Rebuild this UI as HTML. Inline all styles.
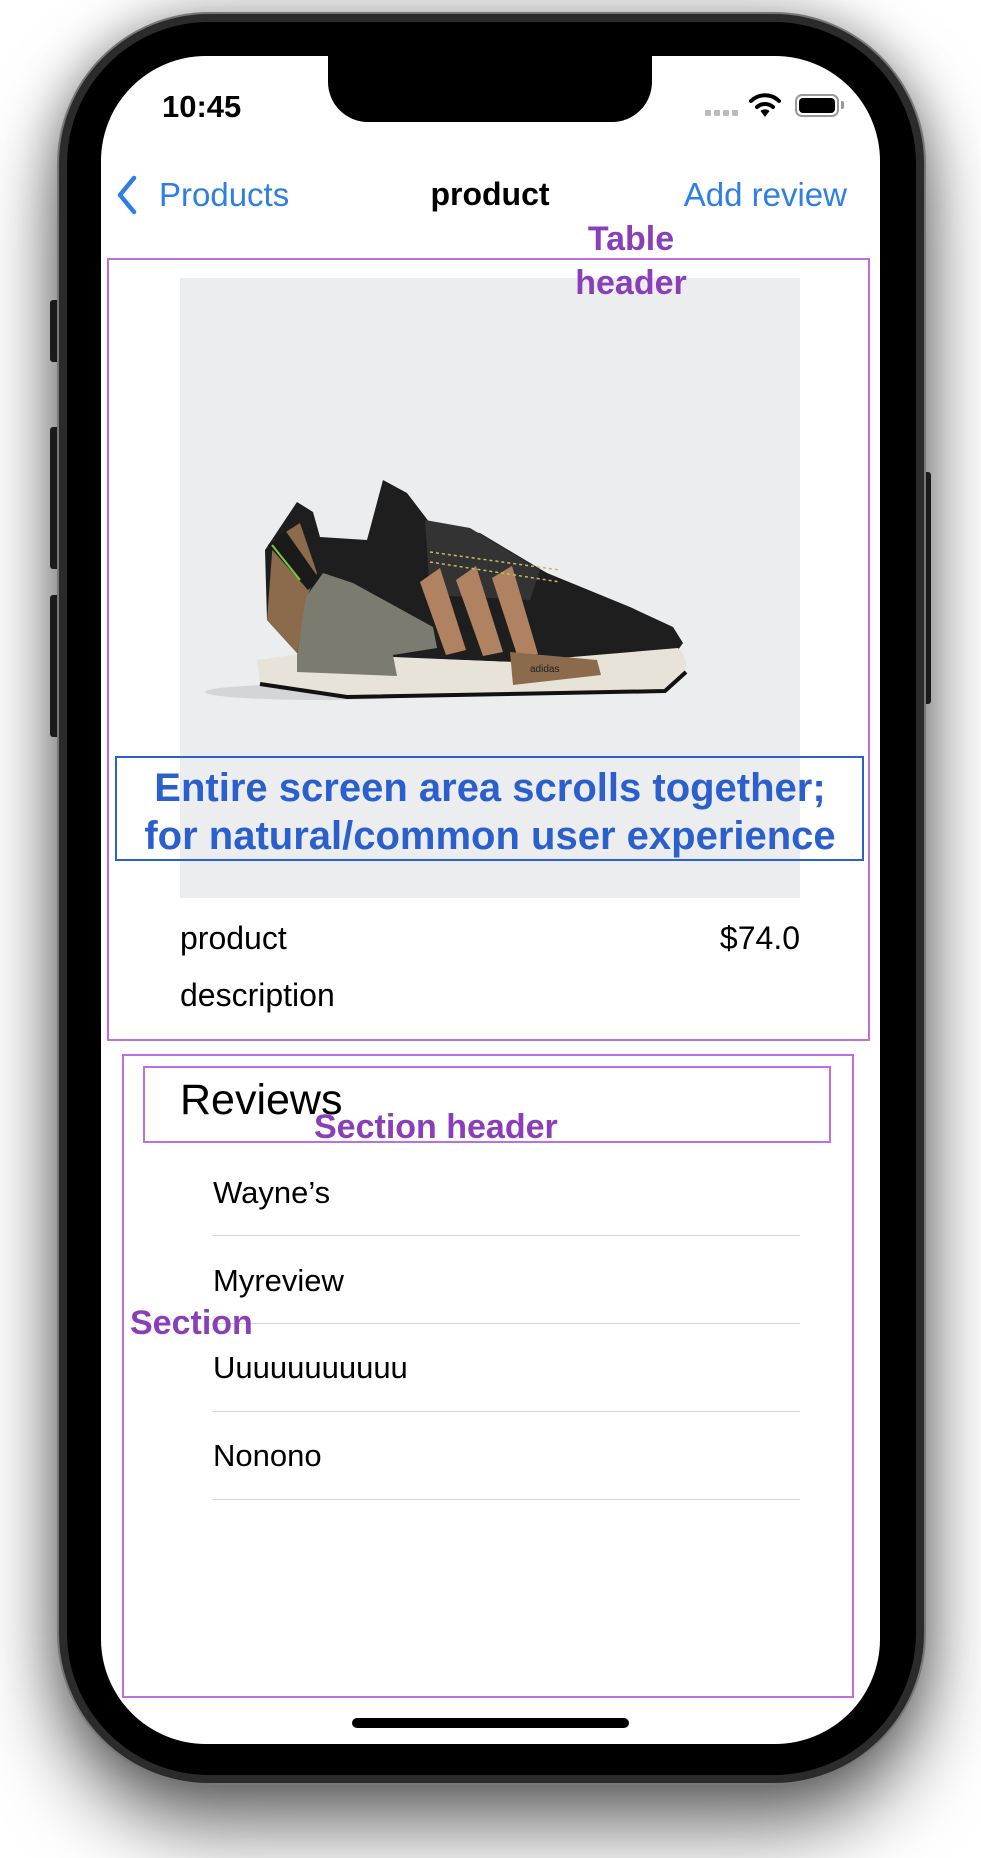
<!DOCTYPE html>
<html><head><meta charset="utf-8"><style>
*{margin:0;padding:0;box-sizing:border-box}
html,body{width:981px;height:1858px;overflow:hidden;background:#fff;font-family:"Liberation Sans",sans-serif}
.abs{position:absolute}
.phone{left:59px;top:14px;width:865px;height:1769px;border-radius:150px;background:#000;border:8px solid #2b2b2b;box-shadow:0 0 0 2px #777,0 45px 80px rgba(0,0,0,.55),0 0 50px rgba(0,0,0,.35)}
.screen{left:101px;top:56px;width:779px;height:1688px;border-radius:105px;background:#fff;overflow:hidden}
.notch{left:328px;top:50px;width:324px;height:72px;background:#000;border-radius:0 0 40px 40px}
.btn{background:#2a2a2a;border-radius:3px}
.t{position:absolute;white-space:nowrap;line-height:1}
.purple{color:#8a3fb8;font-weight:bold}
.box{position:absolute;border:2px solid #bb6fe3}
.sep{position:absolute;left:212px;width:588px;height:1px;background:#d6d6d6}
</style></head><body>
<div class="abs btn" style="left:50px;top:300px;width:10px;height:62px"></div>
<div class="abs btn" style="left:50px;top:427px;width:10px;height:142px"></div>
<div class="abs btn" style="left:50px;top:595px;width:10px;height:142px"></div>
<div class="abs btn" style="left:922px;top:472px;width:9px;height:232px"></div>
<div class="abs phone"></div>
<div class="abs screen"></div>
<div class="abs notch"></div>

<div class="t" style="left:162px;top:91px;font-size:31px;font-weight:bold;color:#000">10:45</div>
<div class="abs" style="left:705px;top:110px">
 <span class="abs" style="left:0;width:6px;height:6px;background:#bbb;border-radius:1px"></span>
 <span class="abs" style="left:9px;width:6px;height:6px;background:#bbb;border-radius:1px"></span>
 <span class="abs" style="left:18px;width:6px;height:6px;background:#bbb;border-radius:1px"></span>
 <span class="abs" style="left:27px;width:6px;height:6px;background:#bbb;border-radius:1px"></span>
</div>
<svg class="abs" style="left:749px;top:92px" width="32" height="26" viewBox="0 0 32 26">
 <path d="M2 9 A20 20 0 0 1 30 9" stroke="#000" stroke-width="4" fill="none" stroke-linecap="round"/>
 <path d="M8 15 A12 12 0 0 1 24 15" stroke="#000" stroke-width="4" fill="none" stroke-linecap="round"/>
 <path d="M11.5 19 L16 25 L20.5 19 A7 7 0 0 0 11.5 19Z" fill="#000"/>
</svg>
<div class="abs" style="left:795px;top:94px;width:44px;height:23px;border:2px solid #999;border-radius:7px"></div>
<div class="abs" style="left:799px;top:98px;width:36px;height:15px;background:#000;border-radius:4px"></div>
<div class="abs" style="left:841px;top:101px;width:3px;height:8px;background:#999;border-radius:0 2px 2px 0"></div>

<svg class="abs" style="left:115px;top:175px" width="24" height="40" viewBox="0 0 24 40"><path d="M19 3 L5 20 L19 37" stroke="#2f7ee6" stroke-width="4.5" fill="none" stroke-linecap="round" stroke-linejoin="round"/></svg>
<div class="t" style="left:159px;top:178px;font-size:33px;color:#2f7ee6">Products</div>
<div class="t" style="left:490px;top:178px;font-size:32px;font-weight:bold;transform:translateX(-50%)">product</div>
<div class="t" style="right:134px;top:178px;font-size:33px;color:#2f7ee6">Add review</div>

<div class="box" style="left:107px;top:258px;width:763px;height:783px"></div>

<div class="abs" style="left:180px;top:278px;width:620px;height:620px;background:#ecedef"></div>
<svg class="abs" style="left:0;top:0" width="981" height="900" viewBox="0 0 981 900">
 <ellipse cx="320" cy="692" rx="115" ry="8" fill="#d4d5d6"/>
 <polygon points="265,550 297,502 313,512 320,537 367,540 383,480 407,493 433,527 480,533 547,573 630,607 673,627 683,643 673,657 513,662 297,653 267,620" fill="#1e1e1e"/>
 <polygon points="425,520 470,528 540,570 530,600 430,595" fill="#333"/>
 <path d="M257 660 L300 654 L513 662 L678 648 Q690 660 684 672 L665 690 L347 696 L260 684 Z" fill="#e8e3d8"/>
 <path d="M260 684 L347 697 L665 691 L686 672" stroke="#111" stroke-width="4" fill="none"/>
 <polygon points="267,620 273,540 300,523 317,573 307,597 297,653" fill="#8c6a4c"/>
 <polygon points="268,545 285,530 320,580 308,590" fill="#1a1a1a"/>
 <path d="M272 545 L300 580" stroke="#7ecb3a" stroke-width="2"/>
 <polygon points="297,655 306,597 323,573 353,583 433,627 437,648 393,655 397,676 297,672" fill="#7b7c6f"/>
 <polygon points="420,582 440,568 466,650 446,655" fill="#b08262"/>
 <polygon points="456,580 476,566 503,652 483,656" fill="#b08262"/>
 <polygon points="492,578 512,566 538,654 518,658" fill="#b08262"/>
 <polygon points="510,652 597,660 601,675 513,685" fill="#8c6a4c"/>
 <text x="530" y="672" font-size="10" fill="#222" font-family="Liberation Sans">adidas</text>
 <path d="M430 552 L560 570" stroke="#c8b86a" stroke-width="1.5" stroke-dasharray="3 3"/>
 <path d="M430 562 L560 582" stroke="#c8b86a" stroke-width="1.5" stroke-dasharray="3 3"/>
</svg>

<div class="t purple" style="left:631px;top:222px;font-size:34px;transform:translateX(-50%)">Table</div>
<div class="t purple" style="left:631px;top:266px;font-size:34px;transform:translateX(-50%)">header</div>

<div class="box" style="left:115px;top:756px;width:749px;height:105px;border-color:#2a5fcc"></div>
<div class="t" style="left:490px;top:768px;font-size:40px;font-weight:bold;color:#2a5fcc;transform:translateX(-50%)">Entire screen area scrolls together;</div>
<div class="t" style="left:490px;top:816px;font-size:40px;font-weight:bold;color:#2a5fcc;transform:translateX(-50%)">for natural/common user experience</div>

<div class="t" style="left:180px;top:922px;font-size:32px">product</div>
<div class="t" style="right:181px;top:922px;font-size:32px">$74.0</div>
<div class="t" style="left:180px;top:979px;font-size:32px">description</div>

<div class="box" style="left:122px;top:1054px;width:732px;height:644px"></div>
<div class="box" style="left:143px;top:1066px;width:688px;height:77px"></div>
<div class="t" style="left:180px;top:1079px;font-size:43px">Reviews</div>
<div class="t purple" style="left:314px;top:1110px;font-size:34px">Section header</div>

<div class="t" style="left:213px;top:1177px;font-size:31px">Wayne’s</div>
<div class="sep" style="top:1235px"></div>
<div class="t" style="left:213px;top:1265px;font-size:31px">Myreview</div>
<div class="sep" style="top:1323px"></div>
<div class="t purple" style="left:130px;top:1306px;font-size:34px">Section</div>
<div class="t" style="left:213px;top:1352px;font-size:31px">Uuuuuuuuuuu</div>
<div class="sep" style="top:1411px"></div>
<div class="t" style="left:213px;top:1440px;font-size:31px">Nonono</div>
<div class="sep" style="top:1499px"></div>

<div class="abs" style="left:352px;top:1718px;width:277px;height:10px;background:#000;border-radius:5px"></div>
</body></html>
